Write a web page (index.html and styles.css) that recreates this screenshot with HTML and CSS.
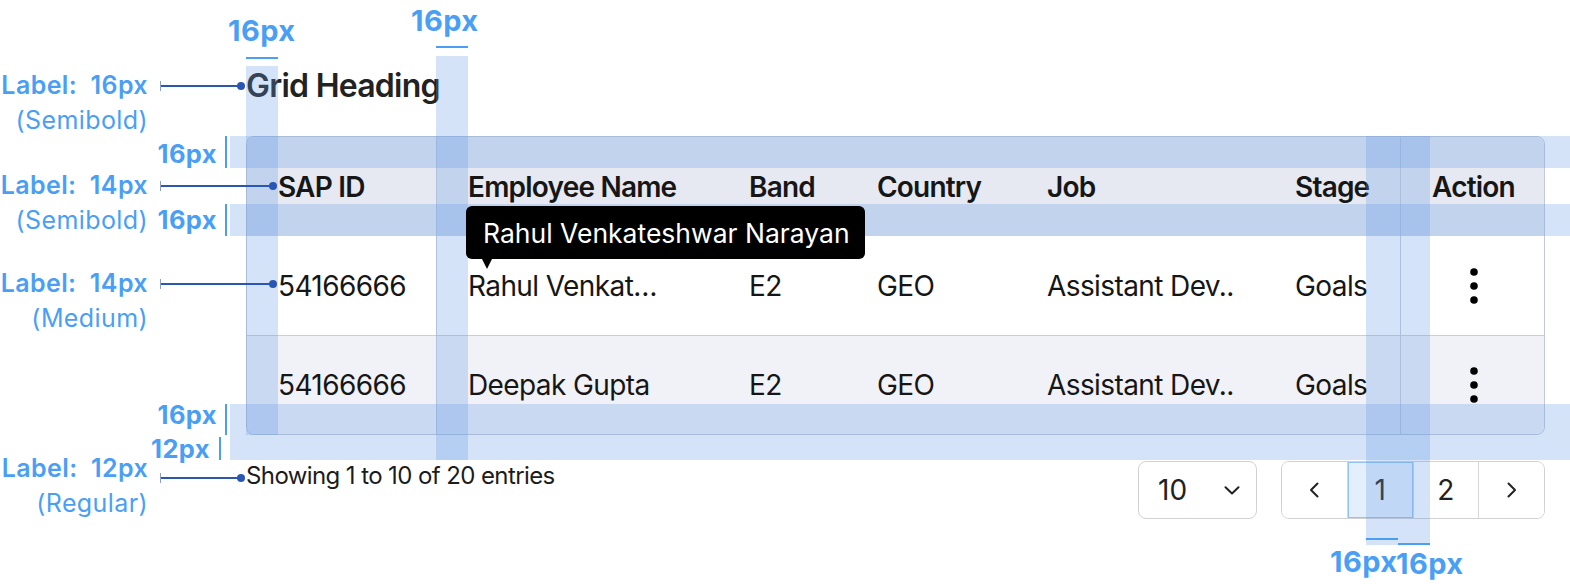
FILE: index.html
```html
<!DOCTYPE html>
<html lang="en">
<head>
    <meta charset="UTF-8">
    <meta name="viewport" content="width=device-width, initial-scale=1.0">
    <title>Grid Spec</title>
    <link rel="stylesheet" href="styles.css">
</head>
<body>
    <div class="canvas">
        <section class="grid-block">
            <h1 class="grid-title">Grid Heading</h1>

            <div class="data-grid">
                <div class="grid-row grid-head">
                    <div class="cell">SAP ID</div>
                    <div class="cell cell-name">Employee Name</div>
                    <div class="cell">Band</div>
                    <div class="cell">Country</div>
                    <div class="cell">Job</div>
                    <div class="cell">Stage</div>
                    <div class="cell cell-action">Action</div>
                </div>
                <div class="grid-row">
                    <div class="cell">54166666</div>
                    <div class="cell cell-name">
                        Rahul Venkat…
                        <div class="tooltip">Rahul Venkateshwar Narayan</div>
                    </div>
                    <div class="cell">E2</div>
                    <div class="cell">GEO</div>
                    <div class="cell">Assistant Dev..</div>
                    <div class="cell">Goals</div>
                    <div class="cell cell-action">
                        <svg class="kebab" width="8" height="36" viewBox="0 0 8 36"><circle cx="4" cy="4" r="3.8"/><circle cx="4" cy="18" r="3.8"/><circle cx="4" cy="32" r="3.8"/></svg>
                    </div>
                </div>
                <div class="grid-row grid-row-alt">
                    <div class="cell">54166666</div>
                    <div class="cell cell-name">Deepak Gupta</div>
                    <div class="cell">E2</div>
                    <div class="cell">GEO</div>
                    <div class="cell">Assistant Dev..</div>
                    <div class="cell">Goals</div>
                    <div class="cell cell-action">
                        <svg class="kebab" width="8" height="36" viewBox="0 0 8 36"><circle cx="4" cy="4" r="3.8"/><circle cx="4" cy="18" r="3.8"/><circle cx="4" cy="32" r="3.8"/></svg>
                    </div>
                </div>
            </div>

            <div class="grid-footer">
                <span class="entries">Showing 1 to 10 of 20 entries</span>
                <div class="grid-controls">
                    <div class="page-size">
                        <span>10</span>
                        <svg width="16" height="9" viewBox="0 0 16 9"><path d="M1.5 1.2 L8 7.5 L14.5 1.2" fill="none" stroke="#222" stroke-width="2" stroke-linecap="round" stroke-linejoin="round"/></svg>
                    </div>
                    <div class="pager">
                        <button class="page-btn"><svg width="10" height="16" viewBox="0 0 10 16"><path d="M8.5 1.5 L2 8 L8.5 14.5" fill="none" stroke="#222" stroke-width="2" stroke-linecap="round" stroke-linejoin="round"/></svg></button>
                        <button class="page-btn active">1</button>
                        <button class="page-btn">2</button>
                        <button class="page-btn"><svg width="10" height="16" viewBox="0 0 10 16"><path d="M1.5 1.5 L8 8 L1.5 14.5" fill="none" stroke="#222" stroke-width="2" stroke-linecap="round" stroke-linejoin="round"/></svg></button>
                    </div>
                </div>
            </div>
        </section>

        <!-- redline annotations -->
        <div class="redlines">
            <div class="band band-v band-sap"></div>
            <div class="band band-v band-name"></div>
            <div class="band band-v band-stage"></div>
            <div class="band band-v band-action"></div>
            <div class="band band-h band-head-top"></div>
            <div class="band band-h band-head-bottom"></div>
            <div class="band band-h band-row-bottom"></div>
            <div class="band band-h band-footer-gap"></div>

            <span class="measure measure-top measure-sap">16px</span>
            <span class="tick-h tick-sap"></span>
            <span class="measure measure-top measure-name">16px</span>
            <span class="tick-h tick-name"></span>

            <span class="measure measure-side measure-head-top">16px</span>
            <span class="tick-v tick-head-top"></span>
            <span class="measure measure-side measure-head-bottom">16px</span>
            <span class="tick-v tick-head-bottom"></span>
            <span class="measure measure-side measure-row-bottom">16px</span>
            <span class="tick-v tick-row-bottom"></span>
            <span class="measure measure-side measure-footer-gap">12px</span>
            <span class="tick-v tick-footer-gap"></span>

            <span class="tick-h tick-stage"></span>
            <span class="measure measure-top measure-stage">16px</span>
            <span class="tick-h tick-action"></span>
            <span class="measure measure-top measure-action">16px</span>

            <div class="spec-label spec-heading"><b>Label:&nbsp; 16px</b><span>(Semibold)</span></div>
            <div class="spec-label spec-head"><b>Label:&nbsp; 14px</b><span>(Semibold)</span></div>
            <div class="spec-label spec-body"><b>Label:&nbsp; 14px</b><span>(Medium)</span></div>
            <div class="spec-label spec-footer"><b>Label:&nbsp; 12px</b><span>(Regular)</span></div>

            <div class="pointer pointer-heading"></div>
            <div class="pointer pointer-head"></div>
            <div class="pointer pointer-body"></div>
            <div class="pointer pointer-footer"></div>
        </div>
    </div>
</body>
</html>
```

FILE: styles.css
```css
:root {
    --text-dark: #161616;
    --grid-border: #c3cad6;
    --head-bg: #e6e9f1;
    --row-alt: #f1f2f7;
    --spec-blue: #4a9ff5;
    --spec-line: #2a56b4;
    --band: rgba(101, 155, 230, 0.28);
}

body {
    margin: 0;
    font-family: Inter, "Noto Sans", sans-serif;
    color: var(--text-dark);
    background: #fff;
}

.canvas {
    position: relative;
    width: 1570px;
    height: 584px;
    overflow: hidden;
}

/* ---------- component ---------- */

.grid-block {
    width: 1299px;
    margin-left: 246px;
    padding-top: 66px;
}

.grid-title {
    margin: 0;
    font-size: 32px;
    font-weight: 600;
    line-height: 40px;
    letter-spacing: -0.75px;
    color: #222;
}

.data-grid {
    margin-top: 30px;
    border: 1px solid var(--grid-border);
    border-radius: 8px;
}

.grid-row {
    display: grid;
    grid-template-columns: 189px 281px 128px 170px 248px 137px 144px;
    height: 99px;
    border-bottom: 1px solid #c8cfdb;
    font-size: 28px;
    letter-spacing: -0.6px;
}

.grid-row:last-child {
    height: 98px;
    border-bottom: none;
    border-radius: 0 0 8px 8px;
}

.grid-head {
    border-bottom: none;
    background: var(--head-bg);
    font-weight: 600;
    letter-spacing: -0.8px;
    border-radius: 8px 8px 0 0;
}

.grid-row-alt {
    background: var(--row-alt);
}

.cell {
    display: flex;
    align-items: center;
    padding: 0 32px;
    white-space: nowrap;
}

.cell:first-child {
    padding-left: 31px;
}

.cell-name {
    position: relative;
    border-left: 1px solid #cdd3de;
    padding-left: 31px;
}

.cell-action {
    border-left: 1px solid #c8cfdb;
    padding-left: 31px;
}

.grid-row:not(.grid-head) .cell-action {
    justify-content: center;
    padding: 0 0 0 2px;
}

.kebab {
    fill: #000;
}

.tooltip {
    position: absolute;
    top: -30px;
    left: 29px;
    z-index: 3;
    height: 53px;
    display: flex;
    align-items: center;
    padding: 0 15px 0 17px;
    background: #000;
    color: #fff;
    font-size: 26.5px;
    letter-spacing: 0;
    border-radius: 6px;
}

.tooltip::after {
    content: "";
    position: absolute;
    top: 53px;
    left: 16px;
    border-left: 5.5px solid transparent;
    border-right: 5.5px solid transparent;
    border-top: 10px solid #000;
}

.grid-footer {
    display: flex;
    justify-content: space-between;
    align-items: flex-start;
    margin-top: 25px;
}

.entries {
    font-size: 24px;
    line-height: 32px;
    letter-spacing: -0.6px;
    color: #1c1c1c;
}

.grid-controls {
    display: flex;
    gap: 24px;
    margin-top: 1px;
}

.page-size {
    box-sizing: border-box;
    width: 119px;
    height: 58px;
    display: flex;
    align-items: center;
    justify-content: space-between;
    padding: 0 16px 0 19px;
    border: 1px solid #d2d2d2;
    border-radius: 8px;
    font-size: 28px;
    color: #222;
}

.pager {
    display: flex;
    width: 264px;
    height: 58px;
    box-sizing: border-box;
    border: 1px solid #d2d2d2;
    border-radius: 8px;
    overflow: hidden;
}

.page-btn {
    flex: 1;
    display: flex;
    align-items: center;
    justify-content: center;
    border: none;
    border-left: 1px solid #d6d6d6;
    background: #fff;
    font-family: inherit;
    font-size: 28px;
    color: #222;
    padding: 0;
}

.page-btn:first-child {
    border-left: none;
}

.page-btn.active {
    background: #e4effc;
    box-shadow: inset 0 0 0 1px #92c3f6;
}

/* ---------- redlines ---------- */

.redlines {
    position: absolute;
    inset: 0;
    z-index: 2;
    pointer-events: none;
}

.band {
    position: absolute;
    background: var(--band);
}

.band-sap { left: 246px; top: 66px; width: 32px; height: 369px; }
.band-name { left: 436px; top: 56px; width: 32px; height: 404px; }
.band-stage { left: 1366px; top: 136px; width: 32px; height: 409px; }
.band-action { left: 1398px; top: 136px; width: 32px; height: 409px; }

.band-h { left: 230px; width: 1340px; }
.band-head-top { top: 136px; height: 32px; }
.band-head-bottom { top: 204px; height: 32px; }
.band-row-bottom { top: 404px; height: 31px; }
.band-footer-gap { top: 435px; height: 25px; }

.measure {
    position: absolute;
    color: var(--spec-blue);
    font-weight: 700;
    line-height: 1;
    letter-spacing: 0.4px;
}

.measure-top { font-size: 29px; }
.measure-sap { left: 228px; top: 16px; }
.measure-name { left: 411px; top: 6px; }
.measure-stage { left: 1330px; top: 547px; }
.measure-action { left: 1396px; top: 549px; }

.measure-side {
    font-size: 25.5px;
    right: 1353px;
}

.measure-head-top { top: 141px; }
.measure-head-bottom { top: 207px; }
.measure-row-bottom { top: 402px; }
.measure-footer-gap { top: 436px; right: 1360px; }

.tick-h {
    position: absolute;
    height: 2px;
    width: 32px;
    background: var(--spec-blue);
}

.tick-sap { left: 246px; top: 57px; }
.tick-name { left: 436px; top: 46px; }
.tick-stage { left: 1366px; top: 538px; }
.tick-action { left: 1398px; top: 543px; }

.tick-v {
    position: absolute;
    width: 2px;
    background: var(--spec-blue);
}

.tick-head-top { left: 225px; top: 136px; height: 32px; }
.tick-head-bottom { left: 225px; top: 204px; height: 32px; }
.tick-row-bottom { left: 225px; top: 404px; height: 31px; }
.tick-footer-gap { left: 219px; top: 437px; height: 23px; }

.spec-label {
    position: absolute;
    left: 0;
    width: 148px;
    display: flex;
    flex-direction: column;
    align-items: flex-end;
    color: var(--spec-blue);
    font-size: 25px;
    line-height: 35px;
    letter-spacing: 0.4px;
    white-space: nowrap;
}

.spec-label b { font-weight: 600; }
.spec-label span { font-weight: 400; }

.spec-heading { top: 68px; }
.spec-head { top: 168px; }
.spec-body { top: 266px; }
.spec-footer { top: 451px; }

.pointer {
    position: absolute;
    left: 160px;
    height: 2px;
    background: var(--spec-line);
}

.pointer::before {
    content: "";
    position: absolute;
    left: 0;
    top: -4px;
    width: 1px;
    height: 10px;
    background: #8aa0cc;
}

.pointer::after {
    content: "";
    position: absolute;
    right: -3px;
    top: -3px;
    width: 8px;
    height: 8px;
    border-radius: 50%;
    background: var(--spec-line);
}

.pointer-heading { top: 85px; width: 82px; }
.pointer-head { top: 185px; width: 114px; }
.pointer-body { top: 283px; width: 114px; }
.pointer-footer { top: 477px; width: 82px; }
```
